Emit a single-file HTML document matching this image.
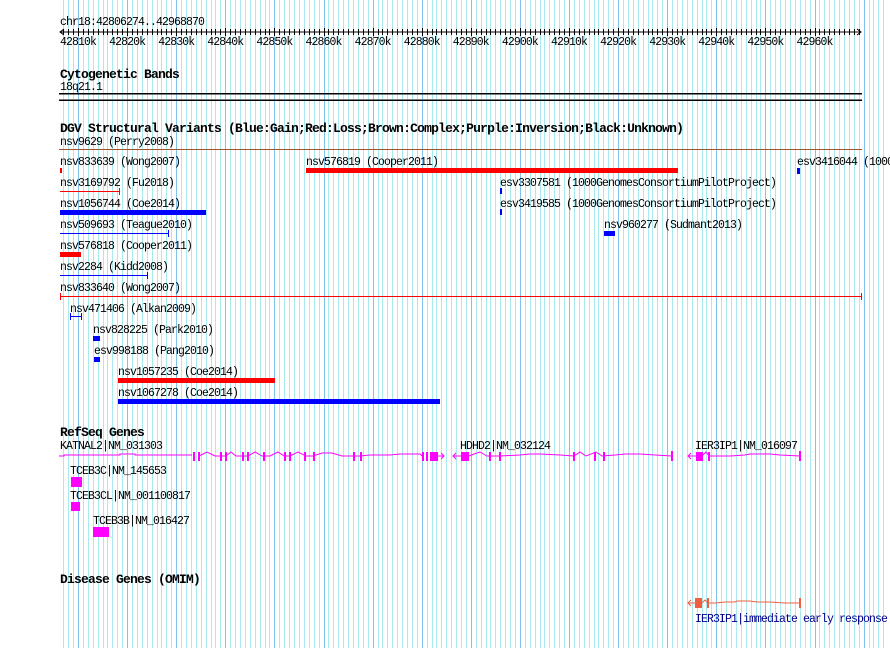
<!DOCTYPE html>
<html><head><meta charset="utf-8"><style>
html,body{margin:0;padding:0;background:#fff;width:890px;height:648px;overflow:hidden}
svg{display:block}
text{font-family:"Liberation Mono","DejaVu Sans Mono",monospace;font-size:11.5px;letter-spacing:-0.9px;fill:#000}
.b{font-weight:bold;font-size:13px;letter-spacing:-0.8px}
</style></head><body>
<svg id="s" width="890" height="648" xmlns="http://www.w3.org/2000/svg">
<g id="grid"></g>
<g id="ticks"></g>
<text x="60" y="25">chr18:42806274..42968870</text>
<line x1="60" y1="32" x2="861" y2="32" stroke="#000"/>
<path d="M64 29 L60 32 L64 35 M857 29 L861 32 L857 35" stroke="#000" fill="none"/>
<g id="labels"></g>

<text class="b" x="60" y="78">Cytogenetic Bands</text>
<text x="60" y="90">18q21.1</text>
<rect x="59" y="93" width="803" height="1.5" fill="#000"/>
<rect x="59" y="99.5" width="803" height="1.5" fill="#000"/>

<text class="b" x="60" y="132">DGV Structural Variants (Blue:Gain;Red:Loss;Brown:Complex;Purple:Inversion;Black:Unknown)</text>
<text x="60" y="145">nsv9629 (Perry2008)</text>
<line x1="59" y1="149.5" x2="862" y2="149.5" stroke="#a0522d"/>

<text x="60" y="165">nsv833639 (Wong2007)</text>
<rect x="60" y="168" width="2" height="5" fill="#f00"/>
<text x="306" y="165">nsv576819 (Cooper2011)</text>
<rect x="306" y="168" width="372" height="5" fill="#f00"/>
<text x="797" y="165">esv3416044 (1000GenomesConsortiumPilotProject)</text>
<rect x="797" y="168" width="3" height="6" fill="#00f"/>

<text x="60" y="186">nsv3169792 (Fu2018)</text>
<path d="M60 191.5 H120 M119.5 188 V195" stroke="#f00"/>
<text x="500" y="186">esv3307581 (1000GenomesConsortiumPilotProject)</text>
<rect x="500" y="188" width="2" height="6" fill="#00f"/>

<text x="60" y="207">nsv1056744 (Coe2014)</text>
<rect x="60" y="210" width="146" height="5" fill="#00f"/>
<text x="500" y="207">esv3419585 (1000GenomesConsortiumPilotProject)</text>
<rect x="500" y="209" width="2" height="6" fill="#00f"/>

<text x="60" y="228">nsv509693 (Teague2010)</text>
<path d="M60 233.5 H169 M168.5 230 V237" stroke="#00f"/>
<text x="604" y="228">nsv960277 (Sudmant2013)</text>
<rect x="604" y="231" width="11" height="5" fill="#00f"/>

<text x="60" y="249">nsv576818 (Cooper2011)</text>
<rect x="60" y="252" width="21" height="5" fill="#f00"/>

<text x="60" y="270">nsv2284 (Kidd2008)</text>
<path d="M60 275.5 H148 M147.5 272 V279" stroke="#00f"/>

<text x="60" y="291">nsv833640 (Wong2007)</text>
<path d="M60 296.5 H862 M60.5 293 V300 M861.5 293 V300" stroke="#f00"/>

<text x="70" y="312">nsv471406 (Alkan2009)</text>
<path d="M70 316.5 H82 M70.5 313 V320 M81.5 313 V320" stroke="#00f"/>
<text x="93" y="333">nsv828225 (Park2010)</text>
<rect x="93" y="336" width="7" height="5" fill="#00f"/>
<text x="94" y="354">esv998188 (Pang2010)</text>
<rect x="94" y="357" width="6" height="5" fill="#00f"/>
<text x="118" y="375">nsv1057235 (Coe2014)</text>
<rect x="118" y="378" width="157" height="5" fill="#f00"/>
<text x="118" y="396">nsv1067278 (Coe2014)</text>
<rect x="118" y="399" width="322" height="5" fill="#00f"/>

<text class="b" x="60" y="436">RefSeq Genes</text>
<text x="60" y="449">KATNAL2|NM_031303</text>
<g stroke="#f0f" fill="none">
<polyline points="59,456 64,456 64,455 120,455 120,454 135,454 135,455 192,455"/>
<polyline points="199,456 207,452 215,456 226,456 231,452 236,456 248,456 255,452 262,456 270,456 278,452 284,456 290,456 298,452 306,456 313,456 322,453 332,453 342,456 353,456 360,456 370,455 390,455 400,454 420,454 422,456"/>
<path d="M438 456 H444 M441 453 L444 456 L441 459"/>
</g>
<g fill="#f0f">
<rect x="193" y="452" width="2" height="9"/><rect x="198" y="452" width="2" height="9"/>
<rect x="220" y="452" width="2" height="9"/><rect x="225" y="452" width="2" height="9"/>
<rect x="242" y="452" width="2" height="9"/><rect x="247" y="452" width="2" height="9"/>
<rect x="263" y="452" width="2" height="9"/>
<rect x="284" y="452" width="2" height="9"/><rect x="289" y="452" width="2" height="9"/>
<rect x="304" y="452" width="2" height="9"/><rect x="313" y="452" width="2" height="9"/>
<rect x="353" y="452" width="2" height="9"/><rect x="360" y="452" width="2" height="9"/>
<rect x="422" y="452" width="2" height="9"/><rect x="426" y="452" width="2" height="9"/>
<rect x="430" y="452" width="8" height="9"/>
</g>

<text x="460" y="449">HDHD2|NM_032124</text>
<g stroke="#f0f" fill="none">
<path d="M453 456 H461 M456 453 L453 456 L456 459"/>
<polyline points="469,456 474,454 480,452 487,456 500,456 520,455 530,454 540,454 560,455 574,456 580,452 586,456 596,452 602,456 615,455 625,454 640,454 655,455 672,456"/>
</g>
<g fill="#f0f">
<rect x="461" y="452" width="8" height="9"/>
<rect x="489" y="452" width="2" height="9"/><rect x="499" y="452" width="2" height="9"/>
<rect x="573" y="452" width="2" height="9"/><rect x="594" y="452" width="2" height="9"/><rect x="603" y="452" width="2" height="9"/>
<rect x="671" y="451" width="2" height="10"/>
</g>

<text x="695" y="449">IER3IP1|NM_016097</text>
<g stroke="#f0f" fill="none">
<path d="M688 456 H696 M691 453 L688 456 L691 459"/>
<polyline points="702,456 706,452 709,456 730,456 745,455 750,454 770,454 780,455 800,456"/>
</g>
<g fill="#f0f">
<rect x="696" y="452" width="7" height="9"/>
<rect x="708" y="452" width="2" height="9"/>
<rect x="799" y="451" width="2" height="10"/>
</g>

<text x="70" y="474">TCEB3C|NM_145653</text>
<rect x="71" y="477" width="11" height="10" fill="#f0f"/>
<text x="70" y="499">TCEB3CL|NM_001100817</text>
<rect x="71" y="502" width="9" height="9" fill="#f0f"/>
<text x="93" y="524">TCEB3B|NM_016427</text>
<rect x="93" y="527" width="16" height="10" fill="#f0f"/>

<text class="b" x="60" y="583">Disease Genes (OMIM)</text>
<g stroke="#f06040" fill="none">
<path d="M688 603 H696 M691 600 L688 603 L691 606"/>
<polyline points="702,603 705,600 708,603 715,603 725,602 735,602 737,601 750,601 757,602 770,602 785,603 800,603"/>
</g>
<g fill="#f06040">
<rect x="695" y="598" width="7" height="10"/>
<rect x="707" y="598" width="2" height="10"/>
<rect x="799" y="598" width="2" height="10"/>
</g>
<text x="695" y="622" style="fill:#00008b">IER3IP1|immediate early response</text>
</svg>
<script>
var NS="http://www.w3.org/2000/svg";
var g=document.getElementById('grid'),t=document.getElementById('ticks'),l=document.getElementById('labels');
for(var k=42806;k<=42974;k++){
 var x=78+(k-42810)*4.91;
 if(x<59.5)continue;
 var major=(k%10===0);
 var ln=document.createElementNS(NS,'line');
 var xx=Math.round(x)+0.5;
 ln.setAttribute('x1',xx);ln.setAttribute('x2',xx);
 ln.setAttribute('y1',0);ln.setAttribute('y2',648);
 ln.setAttribute('stroke',major?'#80c4ee':'#a8eaee');
 g.appendChild(ln);
 if(x<860){
  var tk=document.createElementNS(NS,'line');
  tk.setAttribute('x1',xx);tk.setAttribute('x2',xx);
  tk.setAttribute('y1',major?28:29);tk.setAttribute('y2',major?36:35);
  tk.setAttribute('stroke','#000');t.appendChild(tk);
  if(major){
   var tx=document.createElementNS(NS,'text');
   tx.setAttribute('x',x);tx.setAttribute('y',45);tx.setAttribute('text-anchor','middle');
   tx.textContent=k+'k';l.appendChild(tx);
  }
 }
}
</script>
</body></html>
